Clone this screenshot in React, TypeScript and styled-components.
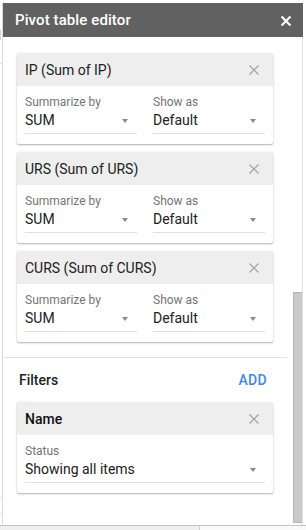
import React from 'react';
import styled, { createGlobalStyle } from 'styled-components';

const GlobalStyle = createGlobalStyle`
  html, body {
    margin: 0;
    padding: 0;
    background: #ffffff;
  }
  * {
    box-sizing: border-box;
  }
`;

const Frame = styled.div`
  width: 306px;
  height: 530px;
  display: flex;
  flex-direction: column;
  font-family: Roboto, 'Liberation Sans', Arial, sans-serif;
  color: #212121;
  overflow: hidden;
`;

const TopStrip = styled.div`
  height: 3px;
  background: #ffffff;
`;

const Middle = styled.div`
  flex: 1;
  display: flex;
  min-height: 0;
`;

const Gutter = styled.div`
  width: 3px;
  background:
    linear-gradient(#e2e2e2, #e2e2e2) 0 34px / 100% 1px no-repeat,
    linear-gradient(#e2e2e2, #e2e2e2) 0 60px / 100% 1px no-repeat,
    linear-gradient(#d0d0d0, #d0d0d0) 0 27px / 1px 10px no-repeat,
    linear-gradient(#e2e2e2, #e2e2e2) 0 494px / 100% 1px no-repeat,
    linear-gradient(#e2e2e2, #e2e2e2) 0 510px / 100% 1px no-repeat,
    linear-gradient(#dadada, #dadada) 2px 0 / 1px 100% no-repeat,
    #ffffff;
`;

const RightGutter = styled.div`
  flex: 1;
  background: #ffffff;
`;

const Panel = styled.div`
  width: 300px;
  display: flex;
  flex-direction: column;
  background: #ffffff;
`;

const Header = styled.div`
  height: 34px;
  background: #616161;
  display: flex;
  align-items: center;
  justify-content: space-between;
  padding: 0 12px 0 12px;
  color: #ffffff;
`;

const HeaderTitle = styled.div`
  font-size: 15px;
  font-weight: 500;
  letter-spacing: 0.1px;
`;

const HeaderClose = styled.svg`
  width: 10px;
  height: 10px;
  margin-top: 1px;
`;

const Body = styled.div`
  flex: 1;
  display: flex;
  min-height: 0;
  border-right: 1px solid #e0e0e0;
`;

const Content = styled.div`
  flex: 1;
  padding: 16px 0 0 0;
  overflow: hidden;
`;

const CardList = styled.div`
  display: flex;
  flex-direction: column;
  gap: 8px;
  padding: 0 16px 0 14px;
`;

const Card = styled.div`
  background: #ffffff;
  border-radius: 2px;
  box-shadow: 0 1px 2px rgba(0, 0, 0, 0.3), 0 0 1px rgba(0, 0, 0, 0.12);
  overflow: hidden;
`;

const CardHeader = styled.div`
  height: 33px;
  background: #eeeeee;
  display: flex;
  align-items: center;
  justify-content: space-between;
  padding: 0 14px 0 8px;
`;

const CardTitle = styled.div<{ $strong?: boolean }>`
  font-size: 14px;
  font-weight: ${p => (p.$strong ? 500 : 400)};
  color: ${p => (p.$strong ? '#111111' : '#212121')};
`;

const CloseIcon = styled.svg`
  width: 10px;
  height: 10px;
`;

const CardBody = styled.div`
  display: grid;
  grid-template-columns: 1fr 1fr;
  column-gap: 16px;
  padding: 8px 8px 10px 8px;
`;

const FullBody = styled(CardBody)`
  grid-template-columns: 1fr;
`;

const Field = styled.div`
  display: flex;
  flex-direction: column;
`;

const FieldLabel = styled.div`
  font-size: 12px;
  line-height: 16px;
  color: #757575;
`;

const Select = styled.div`
  display: flex;
  align-items: center;
  justify-content: space-between;
  height: 24px;
  padding: 0 9px 3px 0;
  border-bottom: 1px solid #e0e0e0;
`;

const SelectValue = styled.div`
  font-size: 14px;
  line-height: 20px;
  color: #212121;
`;

const Caret = styled.div`
  width: 0;
  height: 0;
  border-left: 3.5px solid transparent;
  border-right: 3.5px solid transparent;
  border-top: 4px solid #8a8a8a;
  margin-top: 1px;
`;

const Divider = styled.div`
  height: 1px;
  background: #e0e0e0;
  margin: 15px 2px 0 0;
`;

const FilterRow = styled.div`
  height: 44px;
  display: flex;
  align-items: center;
  justify-content: space-between;
  padding: 0 22px 0 16px;
`;

const SectionTitle = styled.div`
  font-size: 14px;
  font-weight: 500;
  color: #212121;
`;

const AddButton = styled.div`
  font-size: 14px;
  font-weight: 500;
  color: #4285f4;
  letter-spacing: 0.3px;
`;

const Track = styled.div`
  width: 13px;
  padding: 255px 0 0 4px;
`;

const Thumb = styled.div`
  height: 231px;
  background: #c9c9c9;
  border: 1px solid #b5b5b5;
  border-right: none;
`;

const BottomBar = styled.div`
  height: 5px;
  border-top: 1px solid #c4c4c4;
  background: linear-gradient(90deg, #efefef 0, #efefef 199px, #d0d0d0 199px, #d0d0d0 200px, #fafafa 200px);
`;

const X: React.FC<{ color: string; width: number }> = ({ color, width }) => (
  <>
    <line x1="0.5" y1="0.5" x2="9.5" y2="9.5" stroke={color} strokeWidth={width} />
    <line x1="9.5" y1="0.5" x2="0.5" y2="9.5" stroke={color} strokeWidth={width} />
  </>
);

interface ValueField {
  title: string;
}

const values: ValueField[] = [
  { title: 'IP (Sum of IP)' },
  { title: 'URS (Sum of URS)' },
  { title: 'CURS (Sum of CURS)' },
];

const SelectField: React.FC<{ label: string; value: string }> = ({ label, value }) => (
  <Field>
    <FieldLabel>{label}</FieldLabel>
    <Select>
      <SelectValue>{value}</SelectValue>
      <Caret />
    </Select>
  </Field>
);

export default function App() {
  return (
    <>
      <GlobalStyle />
      <Frame>
        <TopStrip />
        <Middle>
          <Gutter />
          <Panel>
            <Header>
              <HeaderTitle>Pivot table editor</HeaderTitle>
              <HeaderClose viewBox="0 0 10 10">
                <X color="#ffffff" width={2.2} />
              </HeaderClose>
            </Header>
            <Body>
              <Content>
                <CardList>
                  {values.map(v => (
                    <Card key={v.title}>
                      <CardHeader>
                        <CardTitle>{v.title}</CardTitle>
                        <CloseIcon viewBox="0 0 10 10">
                          <X color="#a0a0a0" width={1.2} />
                        </CloseIcon>
                      </CardHeader>
                      <CardBody>
                        <SelectField label="Summarize by" value="SUM" />
                        <SelectField label="Show as" value="Default" />
                      </CardBody>
                    </Card>
                  ))}
                </CardList>
                <Divider />
                <FilterRow>
                  <SectionTitle>Filters</SectionTitle>
                  <AddButton>ADD</AddButton>
                </FilterRow>
                <CardList>
                  <Card>
                    <CardHeader>
                      <CardTitle $strong>Name</CardTitle>
                      <CloseIcon viewBox="0 0 10 10">
                        <X color="#a0a0a0" width={1.2} />
                      </CloseIcon>
                    </CardHeader>
                    <FullBody>
                      <SelectField label="Status" value="Showing all items" />
                    </FullBody>
                  </Card>
                </CardList>
              </Content>
              <Track>
                <Thumb />
              </Track>
            </Body>
          </Panel>
          <RightGutter />
        </Middle>
        <BottomBar />
      </Frame>
    </>
  );
}
